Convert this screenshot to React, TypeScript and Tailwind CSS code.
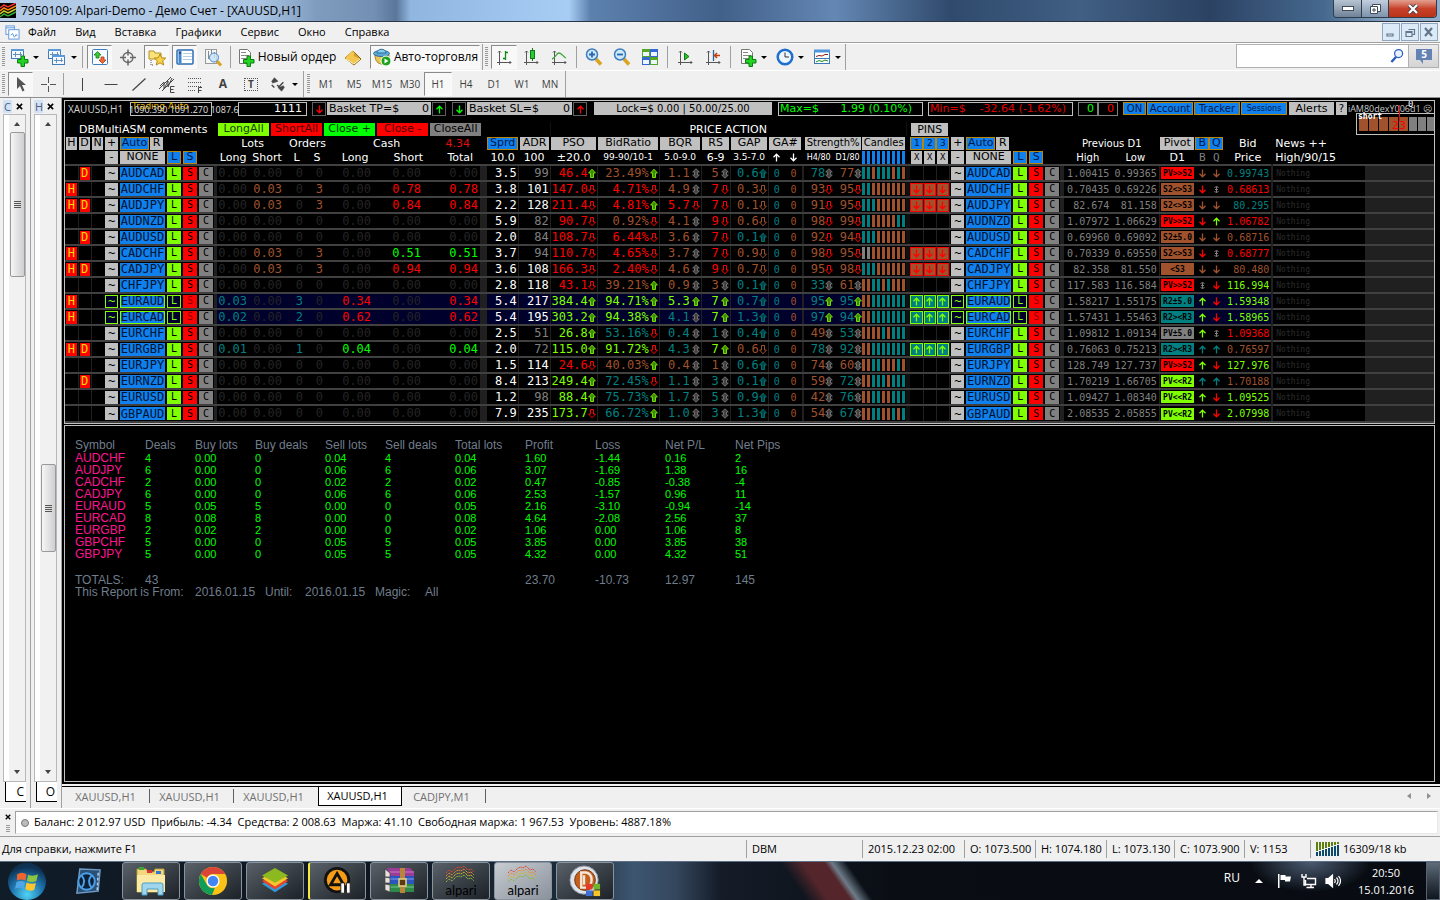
import React from "react";

const UI = "font-['Open_Sans','Noto_Sans',sans-serif]";
const VERD = "font-['DejaVu_Sans',sans-serif]";
const MONO = "font-['DejaVu_Sans_Mono',monospace]";

const TEXT: Record<string, string> = {
  r: "text-[#ff0000]",
  s: "text-[#a0522d]",
  t: "text-[#008080]",
  g: "text-[#7fff00]",
  l: "text-[#00ff00]",
  x: "text-[#808080]",
  w: "text-white",
  n: "text-[#242424]",
};
const BG: Record<string, string> = {
  r: "bg-[#ff0000]",
  s: "bg-[#a0522d]",
  t: "bg-[#008080]",
  g: "bg-[#7fff00]",
  x: "bg-[#808080]",
};

/* ---------- market data ---------- */
type Row = {
  sym: string;
  flags: string;
  pos?: string;
  hl?: boolean;
  vals: string[];
  candles: string;
  pins?: "u" | "d";
  high: string;
  low: string;
  pivot: [string, string];
  bq: [string, string];
  bid: [string, string];
};

const ROWS: Row[] = [
  { sym: "AUDCAD", flags: "D", vals: ["3.5", "99", "46.4 r u", "23.49% s u", "1.1 s b", "5 s b", "0.6 t e", "78 t b", "77 s b"], candles: "ttstttsts", high: "1.00415", low: "0.99365", pivot: ["PV>>S2", "r"], bq: ["sd", "sd"], bid: ["0.99743", "t"] },
  { sym: "AUDCHF", flags: "H", pos: "S 0.03 3 0.78 r", vals: ["3.8", "101", "147.0 r d", "4.71% r d", "4.9 s b", "7 r d", "0.3 s f", "93 s d", "95 s d"], candles: "ttsssssss", pins: "d", high: "0.70435", low: "0.69226", pivot: ["S2<>S3", "s"], bq: ["rd", "xb"], bid: ["0.68613", "r"] },
  { sym: "AUDJPY", flags: "HD", pos: "S 0.03 3 0.84 r", vals: ["2.2", "128", "211.4 r d", "4.81% r u", "5.7 r d", "7 r d", "0.1 s f", "91 s d", "95 s d"], candles: "tttssssss", pins: "d", high: "82.674", low: "81.158", pivot: ["S2<>S3", "s"], bq: ["sd", "sd"], bid: ["80.295", "t"] },
  { sym: "AUDNZD", flags: "", vals: ["5.9", "82", "90.7 r d", "0.92% s d", "4.1 s b", "9 r d", "0.6 s f", "98 s d", "99 s d"], candles: "ttssssstt", high: "1.07972", low: "1.06629", pivot: ["PV>>S2", "r"], bq: ["rd", "gu"], bid: ["1.06782", "r"] },
  { sym: "AUDUSD", flags: "D", vals: ["2.0", "84", "108.7 r d", "6.44% r d", "3.6 s b", "7 r d", "0.1 t e", "92 s d", "94 s d"], candles: "tttssssss", high: "0.69960", low: "0.69092", pivot: ["S2±5.0", "s"], bq: ["sd", "sd"], bid: ["0.68716", "s"] },
  { sym: "CADCHF", flags: "H", pos: "S 0.03 3 0.51 l", vals: ["3.7", "94", "110.7 r d", "4.65% r d", "3.7 s b", "7 r d", "0.9 s f", "98 s d", "95 s d"], candles: "xxsssssss", pins: "d", high: "0.70339", low: "0.69550", pivot: ["S2<>S3", "s"], bq: ["rd", "xb"], bid: ["0.68777", "r"] },
  { sym: "CADJPY", flags: "HD", pos: "S 0.03 3 0.94 r", vals: ["3.6", "108", "166.3 r d", "2.40% r d", "4.6 s b", "9 r d", "0.7 s f", "95 s d", "98 s d"], candles: "tttssssss", pins: "d", high: "82.358", low: "81.550", pivot: ["<S3", "s"], bq: ["sd", "sd"], bid: ["80.480", "s"] },
  { sym: "CHFJPY", flags: "", vals: ["2.8", "118", "43.1 r d", "39.21% s u", "0.9 s b", "3 s b", "0.1 t e", "33 t b", "61 s b"], candles: "ssttstsss", high: "117.583", low: "116.584", pivot: ["PV>>S2", "r"], bq: ["xb", "rd"], bid: ["116.994", "g"] },
  { sym: "EURAUD", flags: "H", hl: true, pos: "L 0.03 3 0.34 r", vals: ["5.4", "217", "384.4 g u", "94.71% g u", "5.3 g u", "7 g u", "0.7 t e", "95 t u", "95 t u"], candles: "ssttttttt", pins: "u", high: "1.58217", low: "1.55175", pivot: ["R2±5.0", "t"], bq: ["gu", "rd"], bid: ["1.59348", "g"] },
  { sym: "EURCAD", flags: "H", hl: true, pos: "L 0.02 2 0.62 r", vals: ["5.4", "195", "303.2 g u", "94.38% g u", "4.1 t b", "7 g u", "1.3 t e", "97 t u", "94 t u"], candles: "ssttttttt", pins: "u", high: "1.57431", low: "1.55463", pivot: ["R2><R3", "t"], bq: ["gu", "rd"], bid: ["1.58965", "g"] },
  { sym: "EURCHF", flags: "", vals: ["2.5", "51", "26.8 g u", "53.16% t d", "0.4 t b", "1 t b", "0.4 t e", "49 s b", "53 t b"], candles: "sssststtt", high: "1.09812", low: "1.09134", pivot: ["PV±5.0", "x"], bq: ["gu", "xb"], bid: ["1.09368", "r"] },
  { sym: "EURGBP", flags: "HD", pos: "L 0.01 1 0.04 l", vals: ["2.0", "72", "115.0 g u", "91.72% g d", "4.3 t b", "7 g u", "0.6 s f", "78 t b", "92 t b"], candles: "ssttttttt", pins: "u", high: "0.76063", low: "0.75213", pivot: ["R2><R3", "t"], bq: ["tu", "tu"], bid: ["0.76597", "s"] },
  { sym: "EURJPY", flags: "", vals: ["1.5", "114", "24.6 r d", "40.03% s u", "0.4 s b", "1 s b", "0.6 t e", "74 s b", "60 s b"], candles: "ssttsssts", high: "128.749", low: "127.737", pivot: ["PV>>S2", "r"], bq: ["gu", "rd"], bid: ["127.976", "g"] },
  { sym: "EURNZD", flags: "D", vals: ["8.4", "213", "249.4 g u", "72.45% t d", "1.1 t b", "3 t b", "0.1 t e", "59 s b", "72 t b"], candles: "sstttsttt", high: "1.70219", low: "1.66705", pivot: ["PV<<R2", "g"], bq: ["tu", "tu"], bid: ["1.70188", "s"] },
  { sym: "EURUSD", flags: "", vals: ["1.2", "98", "88.4 g u", "75.73% t u", "1.7 t b", "5 t b", "0.9 t e", "42 s b", "76 t b"], candles: "ssttssttt", high: "1.09427", low: "1.08340", pivot: ["PV<<R2", "g"], bq: ["gu", "rd"], bid: ["1.09525", "g"] },
  { sym: "GBPAUD", flags: "", vals: ["7.9", "235", "173.7 g d", "66.72% t u", "1.0 t b", "3 t b", "1.3 t e", "54 s b", "67 t b"], candles: "ssttsstst", high: "2.08535", low: "2.05855", pivot: ["PV<<R2", "g"], bq: ["gu", "rd"], bid: ["2.07998", "g"] },
];

/* ---------- arrows ---------- */
const UP = "M4 1.2 7.4 5H5.5V9.500H2.500V5H.6Z";
const DOWN = "M4 9.800 7.4 6H5.500V1.500H2.500V6H.6Z";
const FAT: Record<string, [string, string, string]> = {
  u: ["#6fe000", "#3f8800", UP],
  e: ["#007070", "#004848", UP],
  d: ["#ff0000", "none", DOWN],
  f: ["#a0522d", "none", DOWN],
  b: ["#6a7078", "#4a4038", "M4 .8 7.3 4H5.500V7H7.3L4 10.200 .7 7H2.500V4H.7Z"],
};
function Fat({ k }: { k: string }) {
  const [c, f, d] = FAT[k];
  return (
    <svg viewBox="0 0 8 11" className="h-[11px] w-2 shrink-0" fill={f} stroke={c}>
      <path d={d} />
    </svg>
  );
}
function Thin({ dir, className = "" }: { dir: string; className?: string }) {
  return (
    <svg viewBox="0 0 9 9" className={`mx-auto block h-[9px] w-[9px] ${className}`} fill="none" stroke="currentColor" strokeWidth="1.3">
      {dir === "u" && <path d="M4.5 8.500V1M1.500 4.200 4.500 1.200 7.500 4.200" />}
      {dir === "d" && <path d="M4.5.5V8M1.500 4.800 4.500 7.800 7.500 4.800" />}
      {dir === "b" && <path d="M2.500 3 4.500 1 6.500 3M2.500 6 4.500 8 6.500 6M4.500 1.500V7.500M3 4.500H6" strokeWidth="1" />}
    </svg>
  );
}

/* ---------- main board ---------- */
const COLS = [
  "w-[13px]", "w-[13px]", "w-[13px]", "w-[15px]", "w-[47px]", "w-[16px]", "w-[16px]", "w-[16px]", "w-[3px]",
  "w-[32px]", "w-[35px]", "w-[21px]", "w-[20px]", "w-[48px]", "w-[50px]", "w-[57px]", "w-[7px]",
  "w-[31px]", "w-[32px]", "w-[47px]", "w-[62px]", "w-[42px]", "w-[29px]", "w-[38px]", "w-[17px]", "w-[17px]", "w-[2px]",
  "w-[29px]", "w-[29px]", "w-[44px]", "w-[4px]", "w-[13px]", "w-[13px]", "w-[13px]", "w-[1px]",
  "w-[15px]", "w-[47px]", "w-[16px]", "w-[16px]", "w-[16px]", "w-[4px]",
  "w-[47px]", "w-[48px]", "w-[36px]", "w-[14px]", "w-[14px]", "w-[49px]", "w-[93px]", "w-auto",
];

const GREY = "bg-[#c0c0c0] text-black";
const BLUE = "bg-[#0f80ee] text-[#001848] border border-[#b8860b]";

function Btn({ children, className = "", label }: { children: React.ReactNode; className?: string; label?: string }) {
  return (
    <button aria-label={label} className={`flex h-[13px] w-full items-center justify-center overflow-visible p-0 leading-[12px] whitespace-nowrap ${className}`}>
      {children}
    </button>
  );
}

function Ops({ row }: { row: Row }) {
  const on = "border border-[#7fff00]";
  return (
    <>
      <td className="px-px">
        <Btn className={row.hl ? `${on} bg-[#00002c] text-[#7fff00]` : GREY}>~</Btn>
      </td>
      <td className="px-px">
        <Btn className={`bg-[#0f80ee] text-[#001430] ${row.hl ? on : ""}`}>{row.sym}</Btn>
      </td>
      <td className="px-px text-[10px]">
        <Btn className={row.hl ? `${on} bg-[#00002c] text-[#7fff00]` : "bg-[#7fff00] text-black"}>L</Btn>
      </td>
      <td className="px-px text-[10px]">
        <Btn className={`bg-[#ff0000] ${row.hl ? "text-[#8b0000]" : "text-black"}`}>S</Btn>
      </td>
      <td className="px-px text-[10px]">
        <Btn className="bg-[#808080] text-black">C</Btn>
      </td>
      <td className="bg-[#202020]" />
    </>
  );
}

function Flag({ on, c }: { on: boolean; c: string }) {
  return (
    <td className="border-r border-[#202020] px-px">
      {on && <span className="block h-[13px] bg-[#ff0000] text-center leading-[13px] text-[#ffd700]">{c}</span>}
    </td>
  );
}

function Num({ v, dim, color = "n", bg }: { v: string; dim: string; color?: string; bg?: string }) {
  const on = v !== dim;
  return <td className={`pr-[2px] text-right ${on ? TEXT[color] : TEXT.n} ${bg ?? ""}`}>{v}</td>;
}

function BoardRow({ row }: { row: Row }) {
  const hl = row.hl ? "bg-[#00002c]" : "";
  const [side, lot, ord, cash, cc] = (row.pos ?? "N 0.00 0 0.00 n").split(" ");
  const L = side === "L";
  const S = side === "S";
  const gaps = ["", "gap-px", "gap-[2px]", "gap-[2px]", ""];
  return (
    <tr className="h-4 border-t-2 border-[#404040]">
      <Flag on={row.flags.includes("H")} c="H" />
      <Flag on={row.flags.includes("D")} c="D" />
      <td />
      <Ops row={row} />
      <Num v={L ? lot : "0.00"} dim="0.00" color="t" bg={hl} />
      <Num v={S ? lot : "0.00"} dim="0.00" color="s" bg={hl} />
      <Num v={L ? ord : "0"} dim="0" color="t" bg={hl} />
      <Num v={S ? ord : "0"} dim="0" color="s" bg={hl} />
      <Num v={L ? cash : "0.00"} dim="0.00" color={cc} bg={hl} />
      <Num v={S ? cash : "0.00"} dim="0.00" color={cc} bg={hl} />
      <Num v={cash} dim="0.00" color={cc} bg={hl} />
      <td className="bg-[#202020]" />
      <td className={`border-r border-[#202020] pr-px text-right text-white ${hl}`}>{row.vals[0]}</td>
      <td className={`border-r border-[#202020] pr-px text-right ${Number(row.vals[1]) >= 100 ? "text-white" : TEXT.x} ${hl}`}>{row.vals[1]}</td>
      {row.vals.slice(2, 7).map((v, i) => {
        const [n, c, a] = v.split(" ");
        return (
          <td key={i} className={`border-r border-[#202020] pr-px ${TEXT[c]} ${hl}`}>
            <div className={`flex items-center justify-end ${gaps[i]}`}>
              <span>{n}</span>
              <Fat k={a} />
            </div>
          </td>
        );
      })}
      <td className={`text-center text-[10px] text-[#008080] ${hl}`}>0</td>
      <td className={`text-center text-[10px] text-[#a0522d] ${hl}`}>0</td>
      <td className="bg-[#202020]" />
      {row.vals.slice(7).map((v, i) => {
        const [n, c, a] = v.split(" ");
        return (
          <td key={i} className={`${TEXT[c]} ${hl}`}>
            <div className="flex items-center justify-end">
              <span>{n}</span>
              <Fat k={a} />
            </div>
          </td>
        );
      })}
      <td>
        <div className="flex h-[12px] gap-[2px]">
          {row.candles.split("").map((c, i) => (
            <span key={i} className={`w-[3px] shrink-0 ${BG[c]}`} />
          ))}
        </div>
      </td>
      <td className="bg-[#101010]" />
      {[0, 1, 2].map((i) => (
        <td key={i} className="border-r border-[#202020]">
          {row.pins && (
            <Btn
              label={row.pins === "u" ? "Pin up" : "Pin down"}
              className={row.pins === "u" ? "border border-[#7fff00] bg-[#008080] text-[#7fff00]" : "border border-[#ff0000] bg-[#a0522d] text-[#ff0000]"}
            >
              <Thin dir={row.pins} />
            </Btn>
          )}
        </td>
      ))}
      <td />
      <Ops row={row} />
      <td className="pr-[2px] text-right text-[10px] text-[#808080]">{row.high}</td>
      <td className="border-r border-[#202020] pr-[2px] text-right text-[10px] text-[#808080]">{row.low}</td>
      <td className="px-px text-[8px] font-bold text-black">
        <div className={`h-3 text-center leading-[13px] ${BG[row.pivot[1]]}`}>{row.pivot[0]}</div>
      </td>
      {row.bq.map((b, i) => (
        <td key={i} className={`${TEXT[b[0]]} ${hl}`}>
          <Thin dir={b[1]} />
        </td>
      ))}
      <td className={`border-r-2 border-[#202020] pr-[2px] text-right text-[10px] ${TEXT[row.bid[1]]} ${hl}`}>{row.bid[0]}</td>
      <td className="pl-[3px] text-left text-[8px] text-[#2c2c2c]">Nothing</td>
      <td className="bg-[#202020]" />
    </tr>
  );
}

function SymbolHead1() {
  return (
    <>
      <td className="px-px"><Btn className={GREY}>+</Btn></td>
      <td colSpan={2} className="pl-px">
        <div className="flex gap-px">
          <Btn className={`${BLUE} max-w-[29px]`}>Auto</Btn>
          <Btn className={`${GREY} max-w-[13px]`}>R</Btn>
        </div>
      </td>
      <td colSpan={3} />
    </>
  );
}
function SymbolHead2() {
  return (
    <>
      <td className="px-px"><Btn className={GREY}>-</Btn></td>
      <td className="px-px"><Btn className={GREY}>NONE</Btn></td>
      <td className="px-px"><Btn className={BLUE}>L</Btn></td>
      <td className="px-px"><Btn className={BLUE}>S</Btn></td>
      <td colSpan={2} />
    </>
  );
}

function Board() {
  const closers: [string, string][] = [
    ["LongAll", "bg-[#7fff00] text-[#204000]"],
    ["ShortAll", "bg-[#ff0000] text-[#500000]"],
    ["Close +", "bg-[#00ff00] text-[#003000]"],
    ["Close -", "bg-[#ff0000] text-[#500000]"],
    ["CloseAll", "bg-[#808080] text-black"],
  ];
  return (
    <table className={`w-full table-fixed border-collapse ${MONO} text-[12px] leading-[13px]`}>
      <colgroup>
        {COLS.map((c, i) => (
          <col key={i} className={c} />
        ))}
      </colgroup>
      <thead className={`${VERD} text-[11px] leading-[13px] whitespace-nowrap text-white`}>
        <tr className="h-[14px]">
          <td colSpan={9} className="pl-[14px]">DBMultiASM comments</td>
          <td colSpan={8} className="pr-[6px] pl-px">
            <div className="flex gap-[2px]">
              {closers.map(([t, c]) => (
                <Btn key={t} className={c}>{t}</Btn>
              ))}
            </div>
          </td>
          <td colSpan={2} />
          <td colSpan={11} className="border-x border-[#101010] text-center">PRICE ACTION</td>
          <td />
          <td colSpan={3} className="px-px"><div className={`${GREY} text-center`}>PINS</div></td>
          <td colSpan={15} />
        </tr>
        <tr className="h-[14px]">
          {["H", "D", "N"].map((h) => (
            <td key={h} className="px-px"><Btn className={GREY}>{h}</Btn></td>
          ))}
          <SymbolHead1 />
          <td colSpan={2} className="pl-1 text-center">Lots</td>
          <td colSpan={3} className="pl-[5px] text-left">Orders</td>
          <td className="text-left">Cash</td>
          <td className="pr-[10px] text-right text-[#e01010]">4.34</td>
          <td />
          <td><Btn className={BLUE}>Sprd</Btn></td>
          <td className="pr-px pl-[2px]"><Btn className={GREY}>ADR</Btn></td>
          <td className="px-px"><Btn className={GREY}>PSO</Btn></td>
          <td className="px-px"><Btn className={GREY}>BidRatio</Btn></td>
          <td className="px-px"><Btn className={GREY}>BQR</Btn></td>
          <td className="px-px"><Btn className={GREY}>RS</Btn></td>
          <td className="px-px"><Btn className={GREY}>GAP</Btn></td>
          <td colSpan={2} className="px-px"><Btn className={GREY}>GA#</Btn></td>
          <td />
          <td colSpan={2} className="px-px text-[10px]"><Btn className={GREY}>Strength%</Btn></td>
          <td className="pr-px text-[10px]"><Btn className={GREY}>Candles</Btn></td>
          <td />
          {["1", "2", "3"].map((n) => (
            <td key={n} className="text-[9px]"><Btn className={BLUE}>{n}</Btn></td>
          ))}
          <td />
          <SymbolHead1 />
          <td colSpan={2} className="text-center text-[10px]">Previous D1</td>
          <td className="px-px"><Btn className={GREY}>Pivot</Btn></td>
          <td><Btn className={BLUE}>B</Btn></td>
          <td><Btn className={BLUE}>Q</Btn></td>
          <td className="text-center">Bid</td>
          <td className="pl-[3px] text-left">News ++</td>
          <td />
        </tr>
        <tr className="h-[15px]">
          <td colSpan={3} />
          <SymbolHead2 />
          <td className="text-center">Long</td>
          <td className="pl-px text-center">Short</td>
          <td className="pl-1 text-center">L</td>
          <td className="pl-1 text-center">S</td>
          <td className="pl-3 text-center">Long</td>
          <td className="text-right">Short</td>
          <td className="pr-[7px] text-right">Total</td>
          <td />
          <td className="text-center">10.0</td>
          <td className="text-center">100</td>
          <td className="text-center">±20.0</td>
          <td className="text-center text-[9px]">99-90/10-1</td>
          <td className="text-center text-[9px]">5.0-9.0</td>
          <td className="text-center">6-9</td>
          <td className="text-center text-[9px]">3.5-7.0</td>
          <td><Thin dir="u" /></td>
          <td><Thin dir="d" /></td>
          <td />
          <td className="text-center text-[8px]">H4/80</td>
          <td className="text-center text-[8px]">D1/80</td>
          <td>
            <div className="flex h-[13px] gap-[2px]">
              {Array.from({ length: 9 }, (_, i) => (
                <span key={i} className="w-[3px] shrink-0 bg-[#0f80ee]" />
              ))}
            </div>
          </td>
          <td />
          {[0, 1, 2].map((n) => (
            <td key={n} className={`px-px text-[9px] ${MONO}`}><Btn className={GREY}>X</Btn></td>
          ))}
          <td />
          <SymbolHead2 />
          <td className="text-center text-[10px]">High</td>
          <td className="text-center text-[10px]">Low</td>
          <td className="text-center">D1</td>
          <td className={`text-center text-[#808080] ${MONO}`}>B</td>
          <td className={`text-center text-[#808080] ${MONO}`}>Q</td>
          <td className="text-center">Price</td>
          <td className="pl-[3px] text-left">High/90/15</td>
          <td />
        </tr>
      </thead>
      <tbody>
        {ROWS.map((r) => (
          <BoardRow key={r.sym} row={r} />
        ))}
      </tbody>
    </table>
  );
}

function Basket({ id, name, w }: { id: string; name: string; w: string }) {
  return (
    <div className={`flex h-[13px] items-center bg-[#c0c0c0] px-[2px] text-black ${w}`}>
      <label htmlFor={id} className="whitespace-nowrap">{name}</label>
      <input id={id} defaultValue="0" className="w-full min-w-0 bg-transparent p-0 text-right outline-none" />
    </div>
  );
}
function ArrowBox({ dir, className }: { dir: string; className: string }) {
  return (
    <button aria-label="Step" className={`flex h-[14px] w-[14px] items-center border border-[#606060] bg-black ${className}`}>
      <Thin dir={dir} />
    </button>
  );
}

function TopStrip() {
  return (
    <div className={`relative flex h-[21px] items-start pt-px ${VERD} text-[11px] leading-[13px] whitespace-nowrap`}>
      <div className={`w-[65px] pl-[3px] text-[10px] leading-[14px] text-[#d0d0d0] ${UI}`}>XAUUSD,H1</div>
      <div className="relative h-[14px] w-[82px] border border-[#c0c0c0]">
        <span className="absolute top-[-3px] left-px text-[9px] text-[#e8b800]">Trading Auto</span>
        <span className={`absolute top-0 left-[-2px] text-[9px] text-[#e0e0e0] ${UI}`}>1090.390 1091.270 1087.6</span>
      </div>
      <div className="ml-[26px] h-[14px] w-[69px] border border-[#c0c0c0] pr-1 text-right leading-[12px] text-white">1111</div>
      <div className="ml-[5px] flex gap-px">
        <ArrowBox dir="d" className="text-[#ff0000]" />
        <Basket id="tp" name="Basket TP=$" w="w-[104px]" />
        <ArrowBox dir="u" className="text-[#00ff00]" />
      </div>
      <div className="ml-[6px] flex gap-px">
        <ArrowBox dir="d" className="text-[#00ff00]" />
        <Basket id="sl" name="Basket SL=$" w="w-[105px]" />
        <ArrowBox dir="u" className="text-[#ff0000]" />
      </div>
      <div className="ml-[7px] h-[13px] w-[178px] bg-[#c0c0c0] text-center text-[10px] text-black">Lock=$ 0.00 | 50.00/25.00</div>
      <div className="ml-[6px] flex h-[14px] w-[145px] justify-between border border-[#c0c0c0] pr-[10px] pl-px leading-[12px] text-[#00ff00]">
        <span>Max=$</span>
        <span>1.99 (0.10%)</span>
      </div>
      <div className="ml-[5px] flex h-[14px] w-[145px] justify-between border border-[#c0c0c0] pr-[6px] pl-px leading-[12px] text-[#e00000]">
        <span>Min=$</span>
        <span>-32.64 (-1.62%)</span>
      </div>
      <div className="ml-[5px] h-[14px] w-[20px] border border-[#808080] pr-[3px] text-right leading-[12px] text-[#00ff00]">0</div>
      <div className="h-[14px] w-[20px] border border-[#808080] pr-[3px] text-right leading-[12px] text-[#ff0000]">0</div>
      <div className="ml-[5px] flex gap-px text-[10px]">
        <Btn className={`${BLUE} min-w-[23px]`}>ON</Btn>
        <Btn className={`${BLUE} min-w-[46px]`}>Account</Btn>
        <Btn className={`${BLUE} min-w-[46px]`}>Tracker</Btn>
        <Btn className={`${BLUE} min-w-[46px] text-[8px]`}>Sessions</Btn>
        <Btn className={`${GREY} ml-px min-w-[45px] text-[11px]`}>Alerts</Btn>
        <Btn className={`${GREY} ml-px min-w-[11px]`}>?</Btn>
      </div>
      <div className={`ml-auto pr-[2px] text-[9px] text-[#c8c8c8] ${UI}`}>iAM80dexY006d1 ☹</div>
      <div className="absolute top-[12px] right-[-1px] flex h-[22px] w-[79px] items-end gap-px overflow-visible border border-[#c0c0c0] bg-black px-[2px] pb-[3px]">
        {["s", "s", "s", "s", "s"].map((c, i) => (
          <span key={i} className={`h-[14px] w-[9px] shrink-0 ${BG[c]}`} />
        ))}
        {[0, 1, 2].map((i) => (
          <span key={i} className="h-[14px] w-[8px] shrink-0 bg-[#808080]" />
        ))}
        <span className={`absolute top-[-4px] left-px text-[8px] font-bold text-white ${MONO}`}>short</span>
        <span className="absolute top-[5px] left-[35px] text-[11px] text-[#ff0000]">23</span>
        <span className="absolute top-[-9px] left-[42px] h-[16px] w-px bg-[#ff0000]" />
        <span className={`absolute top-[-14px] left-[51px] text-[9px] leading-[9px] text-white ${MONO}`}>0</span>
      </div>
    </div>
  );
}

/* ---------- report ---------- */
const HEADS = ["Symbol", "Deals", "Buy lots", "Buy deals", "Sell lots", "Sell deals", "Total lots", "Profit", "Loss", "Net P/L", "Net Pips"];
const RCOLS = ["w-[70px]", "w-[50px]", "w-[60px]", "w-[70px]", "w-[60px]", "w-[70px]", "w-[70px]", "w-[70px]", "w-[70px]", "w-[70px]", "w-[70px]"];
const REPORT = [
  "AUDCHF 4 0.00 0 0.04 4 0.04 1.60 -1.44 0.16 2",
  "AUDJPY 6 0.00 0 0.06 6 0.06 3.07 -1.69 1.38 16",
  "CADCHF 2 0.00 0 0.02 2 0.02 0.47 -0.85 -0.38 -4",
  "CADJPY 6 0.00 0 0.06 6 0.06 2.53 -1.57 0.96 11",
  "EURAUD 5 0.05 5 0.00 0 0.05 2.16 -3.10 -0.94 -14",
  "EURCAD 8 0.08 8 0.00 0 0.08 4.64 -2.08 2.56 37",
  "EURGBP 2 0.02 2 0.00 0 0.02 1.06 0.00 1.06 8",
  "GBPCHF 5 0.00 0 0.05 5 0.05 3.85 0.00 3.85 38",
  "GBPJPY 5 0.00 0 0.05 5 0.05 4.32 0.00 4.32 51",
];
function Report() {
  return (
    <div className="px-[10px] pt-[12px] font-['Liberation_Sans',Arial,sans-serif] text-[12px] leading-[12px] text-[#707d8c]">
      <table className="table-fixed border-collapse text-left whitespace-nowrap">
        <colgroup>
          {RCOLS.map((c, i) => (
            <col key={i} className={c} />
          ))}
        </colgroup>
        <thead>
          <tr className="h-[14px]">
            {HEADS.map((h) => (
              <th key={h} className="p-0 font-normal">{h}</th>
            ))}
          </tr>
        </thead>
        <tbody>
          {REPORT.map((r) => (
            <tr key={r} className="h-3 text-[11px] text-[#00ff00]">
              {r.split(" ").map((v, i) => (
                <td key={i} className={`h-3 p-0 leading-[12px] ${i ? "" : "text-[12px] text-[#ff1493]"}`}>{v}</td>
              ))}
            </tr>
          ))}
          <tr className="h-[26px] align-bottom">
            {["TOTALS:", "43", "", "", "", "", "", "23.70", "-10.73", "12.97", "145"].map((v, i) => (
              <td key={i}>{v}</td>
            ))}
          </tr>
        </tbody>
      </table>
      <div className="flex whitespace-nowrap">
        <span className="w-[120px]">This Report is From:</span>
        <span className="w-[70px]">2016.01.15</span>
        <span className="w-10">Until:</span>
        <span className="w-[70px]">2016.01.15</span>
        <span className="w-[50px]">Magic:</span>
        <span>All</span>
      </div>
    </div>
  );
}

/* ---------- toolbars ---------- */
function Svg({ children, s = 20 }: { children: React.ReactNode; s?: number }) {
  return (
    <svg viewBox="0 0 20 20" width={s} height={s} fill="none" className="shrink-0">
      {children}
    </svg>
  );
}
const Plus = () => <path d="M11 9h3.500v3.500H18V16h-3.500v3.500H11V16H7.500v-3.500H11Z" fill="#22d322" stroke="#0b7d12" />;
const Axes = () => <path d="M5.500 4v14M3 15.500h14M4 5.500 5.500 4 7 5.500M15.500 14l1.500 1.500-1.500 1.500" stroke="#555" />;
const Win = ({ x, y }: { x: number; y: number }) => (
  <g>
    <rect x={x + 0.5} y={y + 0.5} width="12" height="9" fill="#f4f9ff" stroke="#3f7dbd" />
    <path d={`M${x} ${y + 1}h13`} stroke="#5b9bd9" strokeWidth="2" />
    <path d={`M${x + 2} ${y + 5.5}h9M${x + 4.5} ${y + 3}v5M${x + 9.5} ${y + 3}v4`} stroke="#6a8fb5" />
  </g>
);
const Doc = () => (
  <>
    <path d="M3.500 2.500h8l3 3v11h-11Z" fill="#fff" stroke="#777" />
    <path d="M5 5.500h5M5 8.500h8M5 11.500h7" stroke="#888" />
  </>
);
const Glass = ({ minus }: { minus?: boolean }) => (
  <>
    <path d="m12 12 5 5.500" stroke="#d9a520" strokeWidth="3.500" />
    <circle cx="8" cy="7.500" r="5.500" fill="#cfe9fb" stroke="#3c7dbe" strokeWidth="1.500" />
    <path d={minus ? "M5 7.500h6" : "M5 7.500h6M8 4.500v6"} stroke="#2b67b0" strokeWidth="1.800" />
  </>
);
const Star = () => <path d="m13 7 1.700 3.800 4 .3-3 2.700 1 4.200-3.700-2.200-3.700 2.200 1-4.200-3-2.700 4-.3Z" fill="#fbd34a" stroke="#b88a14" />;

const PRESSED = "border border-[#fafafa] border-t-[#8a8a8a] border-l-[#8a8a8a] bg-[#f8f8f8]";
function Tool({ label, on, children, className = "w-7" }: { label: string; on?: boolean; children: React.ReactNode; className?: string }) {
  return (
    <button aria-label={label} className={`flex h-[24px] shrink-0 items-center justify-center ${on ? PRESSED : ""} ${className}`}>
      {children}
    </button>
  );
}
const Tri = () => <span className="h-0 w-0 border-x-[3px] border-t-[3px] border-x-transparent border-t-black" />;
const Sep = ({ tight }: { tight?: boolean }) => <span className={`h-[22px] w-px shrink-0 bg-[#a0a0a0] ${tight ? "mx-[3px]" : "mx-[4px]"}`} />;
const Grip = () => (
  <span className="mx-[2px] h-[20px] w-[3px] shrink-0 bg-[repeating-linear-gradient(180deg,#999_0_1px,#f0f0f0_1px_2px)]" />
);

function Toolbar1() {
  return (
    <div className="flex h-[27px] items-center border-t border-white">
      <Grip />
      <Tool label="New chart" className="ml-px w-[33px] gap-[3px]"><Svg><Win x={1} y={2} /><Plus /></Svg><Tri /></Tool>
      <Tool label="Profiles" className="ml-1 w-[33px] gap-1"><Svg><Win x={1} y={2} /><Win x={5} y={8} /></Svg><Tri /></Tool>
      <Sep />
      <Tool label="Market watch" on className="mr-1 w-[25px]">
        <Svg><rect x="2.500" y="2.500" width="15" height="15" rx="1" fill="#f7fbff" stroke="#3d7ebf" /><path d="m7.500 4.500 3.500 3.500H9v3H6V8H4Z" fill="#38c838" stroke="#128212" strokeWidth=".8" /><path d="m12.500 16.500 3.500-3.500h-2v-3h-3v3H9Z" fill="#f26b3a" stroke="#ad3a10" strokeWidth=".8" /></Svg>
      </Tool>
      <Tool label="Data window" className="mr-1 w-6">
        <Svg><circle cx="10" cy="10.500" r="5" stroke="#666" strokeWidth="1.300" /><path d="M10 2.500v6M10 12.500v6M2 10.500h6M12 10.500h6" stroke="#666" strokeWidth="1.500" /></Svg>
      </Tool>
      <Tool label="Navigator" on className="mr-[3px] w-[25px]">
        <Svg><path d="M2 4h5l1 2h6v6H2Z" fill="#f8e27a" stroke="#b39224" /><path d="M4 13v5h3" stroke="#555" strokeDasharray="1 1" /><Star /></Svg>
      </Tool>
      <Tool label="Terminal" on className="mr-[3px] w-[25px]">
        <Svg><rect x="2" y="3" width="16" height="14" rx="1" fill="#fff" stroke="#2c6cb3" strokeWidth="1.500" /><path d="M5 4v12" stroke="#3f86d0" strokeWidth="3" /><path d="M8 6.500h9M8 9.500h9M8 12.500h9" stroke="#b5cfe8" /><circle cx="5" cy="6" r=".8" fill="#300" /></Svg>
      </Tool>
      <Tool label="Strategy tester" className="mr-[2px] w-[25px]">
        <Svg><rect x="2.500" y="2.500" width="11" height="14" fill="#f6f6f6" stroke="#999" /><path d="M5.500 4v8M8.500 3v5M11.500 5v6" stroke="#888" /><path d="m14 14 4 4.500" stroke="#d9a520" strokeWidth="3" /><circle cx="11" cy="10.500" r="4.500" fill="#c7e3f8cc" stroke="#4b8ac5" /></Svg>
      </Tool>
      <Sep tight />
      <Tool label="Новый ордер" className="w-[104px] gap-[2px] text-[12px]"><Svg><Doc /><Plus /></Svg><span className="whitespace-nowrap">Новый ордер</span></Tool>
      <Tool label="MetaEditor" className="ml-px w-7">
        <Svg><path d="m2 11 8-7 8 8-7 6Z" fill="#d99f28" stroke="#8d6412" /><path d="m2 11 7-7q2 0 2.500 2l-1 3q3 1 6.500 3l-6 5Z" fill="#f3c64f" /><path d="m3 12 8 5 6-5" stroke="#fff3c0" /></Svg>
      </Tool>
      <Tool label="Авто-торговля" on className="ml-[3px] w-[110px] gap-[2px] text-[12px]">
        <Svg><path d="M3 8c0 6 3 9 7 9s7-3 7-9Z" fill="#e9c657" stroke="#a88420" /><ellipse cx="9.500" cy="6.500" rx="8" ry="3" fill="#5aa9d6" stroke="#2a6c99" /><path d="M5 6c0-5 9-5 9 0Z" fill="#8accec" stroke="#2a6c99" /><circle cx="14" cy="14" r="5" fill="#1aa31a" stroke="#fff" /><path d="m12.500 11.500 4 2.500-4 2.500Z" fill="#fff" /></Svg>
        <span className="whitespace-nowrap">Авто-торговля</span>
      </Tool>
      <span className="ml-[2px] h-[26px] w-px bg-[#a0a0a0]" />
      <Grip />
      <Tool label="Bars" on className="ml-px w-[26px]"><Svg><Axes /><path d="M11.500 4v9M11.500 5.500H14M9 11.500h2.500" stroke="#128a12" strokeWidth="1.300" /></Svg></Tool>
      <Tool label="Candles"><Svg><Axes /><path d="M11.500 1v13" stroke="#117711" /><rect x="9.500" y="3.500" width="4" height="8" fill="#24cc38" stroke="#117711" /></Svg></Tool>
      <Tool label="Line"><Svg><Axes /><path d="M3 12c4-1 4-6 7-6s4 4 7 5" stroke="#3aa63a" strokeWidth="1.300" /></Svg></Tool>
      <Sep tight />
      <Tool label="Zoom in"><Svg><Glass /></Svg></Tool>
      <Tool label="Zoom out"><Svg><Glass minus /></Svg></Tool>
      <Tool label="Tile">
        <Svg><path d="M2 2h8v8H2Z" fill="#57a529" /><path d="M10 2h8v8h-8Z" fill="#3568d4" /><path d="M2 10h8v8H2Z" fill="#3568d4" /><path d="M10 10h8v8h-8Z" fill="#57a529" /><path d="M3 5h6v4H3ZM11 5h6v4h-6ZM3 13h6v4H3ZM11 13h6v4h-6Z" fill="#eef6ff" /></Svg>
      </Tool>
      <Sep tight />
      <Tool label="Auto scroll"><Svg><Axes /><path d="m9.500 6 4.500 3.500-4.500 3.500Z" fill="#2dc32d" stroke="#117711" /></Svg></Tool>
      <Tool label="Chart shift"><Svg><Axes /><path d="M10.500 3v11" stroke="#2361a8" strokeWidth="1.300" /><path d="M17 8.500h-5M14 6l-2.500 2.500L14 11" stroke="#c33c0c" strokeWidth="1.500" /></Svg></Tool>
      <Sep tight />
      <Tool label="Indicators" className="w-[37px] gap-[3px]"><Svg><Doc /><Plus /></Svg><Tri /></Tool>
      <Tool label="Periods" className="w-[37px] gap-[3px]"><Svg><circle cx="10" cy="10" r="7.300" fill="#eef6ff" stroke="#1e6fcd" strokeWidth="2.500" /><path d="M10 5.500V10h4" stroke="#333" /></Svg><Tri /></Tool>
      <Tool label="Templates" className="w-[37px] gap-[3px]"><Svg><rect x="2.500" y="3.500" width="15" height="13" fill="#fff" stroke="#3c78b4" /><path d="M2 4h16" stroke="#4f94dc" strokeWidth="3" /><path d="m4 9.500 3-1 3 .5 3-1.500h3" stroke="#8c1d10" /><path d="M2 11.500h16" stroke="#3c78b4" /><path d="m4 15 3-1.500 3 1 3-1.500 3 1" stroke="#1d8a1d" /></Svg><Tri /></Tool>
      <span className="h-[26px] w-px bg-[#a0a0a0]" />
      <div className="mr-px ml-auto flex h-6 self-start">
        <div className="flex w-[173px] items-center border border-[#b0b0b0] bg-white pr-[3px]">
          <input aria-label="Search" className="h-full min-w-0 flex-1 bg-transparent px-1 text-[12px] outline-none" />
          <Svg s={16}><path d="m9 11-6 6.500" stroke="#2a5ac4" strokeWidth="3" /><circle cx="12" cy="7" r="5" fill="#e8f1ff" stroke="#2a5ac4" strokeWidth="1.500" /></Svg>
        </div>
        <button aria-label="Messages" className="flex w-[30px] items-center justify-center border border-l-0 border-[#b0b0b0] bg-linear-to-b from-[#ececec] to-[#d4d4d4]">
          <svg viewBox="0 0 16 16" className="h-4 w-4" fill="#6582b5"><path d="M0 1h16v11H7v4l-3-4H0Z" /><text x="8" y="10" textAnchor="middle" fontFamily="Open Sans" fontSize="10" fontWeight="700" fill="#fff">5</text></svg>
        </button>
      </div>
    </div>
  );
}

function Toolbar2() {
  return (
    <div className="flex h-[27px] items-center border-t border-white text-[10px] text-[#404040]">
      <Grip />
      <Tool label="Cursor" on className="ml-px w-[25px]"><Svg><path d="M6 3v12l3-3 2.500 5.500 2-1L11 11h4Z" fill="#555" /></Svg></Tool>
      <Tool label="Crosshair" className="ml-[2px] w-[26px]"><Svg><path d="M10.500 3v6M10.500 12v6M3 10.500h6M12 10.500h6" stroke="#555" /></Svg></Tool>
      <span className="mx-[2px] h-[22px] w-px bg-[#a0a0a0]" />
      <Tool label="Vertical line" className="ml-[3px] w-7"><Svg><path d="M9.500 4v13" stroke="#444" /></Svg></Tool>
      <Tool label="Horizontal line"><Svg><path d="M3.500 10.500h13" stroke="#444" /></Svg></Tool>
      <Tool label="Trend line"><Svg><path d="m3.500 16.500 13-12" stroke="#444" strokeWidth="1.200" /></Svg></Tool>
      <Tool label="Channel"><Svg><path d="m2 15 12-12M5 17 17 5M3 12l4-4v7l4-8v6l4-9" stroke="#444" /><path d="M17.500 12.500h-4v6h4M13.500 15.500h3" stroke="#444" /></Svg></Tool>
      <Tool label="Fibonacci"><Svg><path d="M3 4.500h14M3 8.500h14M3 12.500h14M3 16.500h8" stroke="#555" strokeDasharray="1 1" /><path d="M17 13.500h-3.500v5.500M13.500 16.500H16.500" stroke="#444" /></Svg></Tool>
      <Tool label="Text"><span className="text-[12px] font-bold">A</span></Tool>
      <Tool label="Label"><span className="border border-dotted border-[#555] px-[3px] text-[10px] leading-[11px] font-bold">T</span></Tool>
      <Tool label="Arrows" className="w-[36px] gap-[5px]"><Svg s={18}><path d="m6 3 4 4-3 1-3 1-1-2ZM14 18l-4-4 3-1 3-1 1 2Z" fill="#444" stroke="#444" strokeWidth=".6" /><path d="m9 11 2 2 5-5M3 11l3 3" stroke="#444" strokeWidth="1.500" /></Svg><Tri /></Tool>
      <span className="mr-px ml-[2px] h-[26px] w-px bg-[#a0a0a0]" />
      <Grip />
      {["M1", "M5", "M15", "M30", "H1", "H4", "D1", "W1", "MN"].map((p) => (
        <Tool key={p} label={p} on={p === "H1"}>{p}</Tool>
      ))}
      <span className="ml-px h-[26px] w-px bg-[#a0a0a0]" />
    </div>
  );
}

function TitleBar() {
  return (
    <header className="flex h-[22px] items-center border-b border-[#2a3546] bg-[linear-gradient(90deg,#b4cce8_0%,#a9c4e2_18%,#7f9cbe_22%,#7390b4_26%,#5a7698_27.5%,#90b6e0_28.500%,#a8cdf5_39.500%,#5d81ae_41%,#41608a_50%,#6487b3_58%,#2f4a6c_66%,#405f83_75%,#2b4263_84%,#46698f_92%,#90adcb_97%)]">
      <svg viewBox="0 0 16 15" className="h-[15px] w-4 bg-black" fill="none">
        <path d="M0 5 4 2l4 2 4-2 4-2" stroke="#e33" strokeWidth="1.500" />
        <path d="m0 8 4-3 4 2 4-2 4-2" stroke="#f80" strokeWidth="1.500" />
        <path d="m0 11 4-3 4 2 4-2 4-2" stroke="#cc2" strokeWidth="1.500" />
        <path d="m0 14 4-3 4 2 4-2 4-2" stroke="#3a3" strokeWidth="1.500" />
      </svg>
      <span className="ml-[5px] text-[12px] whitespace-nowrap text-black">7950109: Alpari-Demo - Демо Счет - [XAUUSD,H1]</span>
      <div className="mr-[3px] ml-auto flex h-[18px] self-start overflow-hidden rounded-b-[4px] border border-t-0 border-[#303c4c] text-white">
        <button aria-label="Minimize" className="flex w-[28px] items-center justify-center border-r border-[#303c4c] bg-linear-to-b from-[#b8c4d2] to-[#6f8297]"><span className="h-[5px] w-[12px] border border-[#404a58] bg-white" /></button>
        <button aria-label="Restore" className="flex w-[27px] items-center justify-center border-r border-[#303c4c] bg-linear-to-b from-[#c2cede] to-[#7d93ad]"><svg viewBox="0 0 12 12" className="h-3 w-3"><path d="M3.500 1.500h8v7h-8Z" fill="#fff" stroke="#404a58" /><path d="M1.500 3.500h7v7h-7Z" fill="#fff" stroke="#404a58" /><path d="M4 6h2v2H4Z" fill="#fff" stroke="#404a58" /></svg></button>
        <button aria-label="Close" className="flex w-[47px] items-center justify-center bg-linear-to-b from-[#e0a090] via-[#c8412a] to-[#b83418]"><svg viewBox="0 0 12 10" className="h-[10px] w-3"><path d="m2 1 8 8M10 1 2 9" stroke="#504048" strokeWidth="4" /><path d="m2 1 8 8M10 1 2 9" stroke="#fff" strokeWidth="2.200" /></svg></button>
      </div>
    </header>
  );
}

function MenuBar() {
  return (
    <nav className="flex h-[21px] items-center border-b border-[#a0a0a0] pl-[5px] text-[11px]">
      <svg viewBox="0 0 16 16" className="h-[15px] w-[15px]" fill="#fff" stroke="#5a96dc"><rect x="1" y="1" width="9" height="9" /><rect x="4" y="5" width="11" height="10" /><path d="m6 11 2-2 2 4 2-3 1 2M1 3h9" fill="none" /></svg>
      {["Файл", "Вид", "Вставка", "Графики", "Сервис", "Окно", "Справка"].map((m) => (
        <button key={m} className="ml-[9px] px-[5px] leading-[18px] first-of-type:ml-[3px]">{m}</button>
      ))}
      <div className="mr-[2px] ml-auto flex gap-px">
        {["M4 12h6v-2H4Z", "M4 7.500h6v5H4ZM6.500 5.500h6v5h-2M4 8.500h6", "m4 4 7 8M11 4 4 12"].map((d, i) => (
          <button key={d} aria-label={["Minimize chart", "Restore chart", "Close chart"][i]} className="h-[18px] w-[18px] border border-[#8fa6c0] bg-[#dce9f7]">
            <svg viewBox="0 0 16 16" className="h-4 w-4" fill="none" stroke="#62768c" strokeWidth={i === 2 ? 2.2 : 1.2}><path d={d} /></svg>
          </button>
        ))}
      </div>
    </nav>
  );
}

function SidePanel({ head, tab, thumb, w }: { head: string; tab: string; thumb: "top" | "mid"; w: string }) {
  return (
    <aside className={`flex flex-col border-r border-[#a0a0a0] bg-[#f0f0f0] pr-1 pl-[3px] ${w}`}>
      <div className="flex h-4 items-center gap-[2px] text-[11px] text-[#506080]">
        <span className="w-[9px] bg-[#d0e2f4] pl-px leading-[13px]">{head}</span>
        <svg viewBox="0 0 8 8" className="ml-[2px] h-[7px] w-[7px]"><path d="m1 1 6 6M7 1 1 7" stroke="#000" strokeWidth="1.800" /></svg>
      </div>
      <div className="flex min-h-0 flex-1 flex-col items-end border border-[#b8b8b8] bg-white">
        <div className="flex min-h-0 w-[16px] flex-1 flex-col items-center bg-[#f1f1f1] py-[7px]">
          <span className="border-x-[3px] border-b-[4px] border-x-transparent border-b-[#444]" />
          <div className={`flex w-[15px] flex-1 flex-col ${thumb === "mid" ? "justify-center pt-[120px]" : "pt-[6px]"}`}>
            <div className={`flex flex-col items-center justify-center gap-px rounded-[2px] border border-[#999] bg-linear-to-r from-[#f6f6f6] to-[#cfcfd2] ${thumb === "mid" ? "h-[88px]" : "h-[145px]"}`}>
              {[0, 1, 2, 3].map((i) => <span key={i} className="h-px w-[7px] bg-[#555]" />)}
            </div>
          </div>
          <span className="border-x-[3px] border-t-[4px] border-x-transparent border-t-[#444]" />
        </div>
      </div>
      <div className="ml-[2px] h-[20px] overflow-hidden border-b border-l border-black bg-white pr-[2px] text-right text-[12px] leading-[19px]">{tab}</div>
      <div className="h-[6px]" />
    </aside>
  );
}

/* ---------- task bar ---------- */
const Alpari = () => (
  <div className="flex flex-col items-center">
    <svg viewBox="0 0 32 18" className="h-[18px] w-8" fill="none">
      {["#e8452a", "#f08a2a", "#d8b82a", "#8ab83a"].map((c, i) => (
        <path key={c} transform={`translate(0 ${i * 3})`} d="m1 8 3-3 3 2 4-4 3-1 2 1 3-2 4 4 3-1 3 3" stroke={c} strokeDasharray="1.500 .6" />
      ))}
    </svg>
    <span className="font-['Lato',sans-serif] text-[13px] leading-[14px] text-black">alpari</span>
  </div>
);
const TASKS: { name: string; icon: React.ReactNode; active?: boolean; yellow?: boolean }[] = [
  { name: "Explorer", icon: <svg viewBox="0 0 34 32" className="h-8 w-[34px]"><path d="M3 4h9l2 3h6l1-3h9v23H3Z" fill="#f3d77c" stroke="#b99a3c" /><path d="M5 2h5v3H5Z" fill="#3aa63a" /><path d="M13 5h5v3h-5Z" fill="#d33" /><path d="M22 6h5v3h-5Z" fill="#37c" /><path d="M3 10h28v17H3Z" fill="#fbe9a6" /><path d="M8 30V20q0-2 2-2h17q2 0 2 2v10h-5v-6H13v6Z" fill="#9fd6ee" stroke="#4b9dc4" /></svg> },
  { name: "Chrome", icon: <svg viewBox="0 0 32 32" className="h-[30px] w-[30px]"><circle cx="16" cy="16" r="15" fill="#fbc116" /><path d="M29 8.500H16a7.500 7.500 0 0 0-6.500 4L3 8.500A15 15 0 0 1 29 8.500Z" fill="#db4437" /><path d="M3 8.500 9.500 20A7.500 7.500 0 0 0 18 23.300L15 31A15 15 0 0 1 3 8.500Z" fill="#0f9d58" /><circle cx="16" cy="16" r="7" fill="#fff" /><circle cx="16" cy="16" r="5.600" fill="#4285f4" /></svg> },
  { name: "BlueStacks", icon: <svg viewBox="0 0 32 30" className="h-[28px] w-[30px]"><path d="m2 18 14-7 14 7-14 9Z" fill="#2f9bd8" /><path d="m2 15 14-7 14 7-14 9Z" fill="#e8432c" /><path d="m2 12 14-7 14 7-14 9Z" fill="#f7c52c" /><path d="m2 9 14-8 14 8-14 8Z" fill="#8bb91f" /></svg> },
  { name: "AIMP", yellow: true, icon: <svg viewBox="0 0 32 32" className="h-[30px] w-[30px]"><circle cx="15" cy="15" r="14" fill="#111" /><circle cx="15" cy="15" r="11" fill="#f59d14" /><path d="m15 8 7 12H8Z" fill="none" stroke="#111" strokeWidth="3" /><path d="M19 18h4v11h-4ZM25 18h4v11h-4Z" fill="#fff" stroke="#222" /></svg> },
  { name: "WinRAR", icon: <svg viewBox="0 0 34 28" className="h-[28px] w-[34px]"><path d="M5 1h23l4 4v4H8Z" fill="#9b3d96" /><path d="M8 5h24" stroke="#c97bc4" /><path d="M7 9h25v8H7Z" fill="#2c55c0" /><path d="M8 12h24" stroke="#7fa0ea" /><path d="M7 17h25v8H7Z" fill="#2f8a4a" /><path d="M8 20h24" stroke="#7ac490" /><path d="M3 2 8 6v4H3ZM3 10l5 1v5H3ZM3 17l5 1v7l-5-2Z" fill="#e8e0e0" stroke="#444" strokeWidth=".7" /><path d="M18 1h5v25h-5Z" fill="#b8863a" /><path d="M17 12h7v7h-7Z" fill="#5a3a10" stroke="#e8d28a" strokeWidth="1.500" /></svg> },
  { name: "Alpari", icon: <Alpari /> },
  { name: "Alpari Demo", icon: <Alpari />, active: true },
  { name: "DBM", icon: <svg viewBox="0 0 34 34" className="h-8 w-8"><circle cx="16" cy="16" r="15" fill="#dfe3ea" stroke="#8b95a5" /><circle cx="17" cy="16" r="11" fill="#c4601c" stroke="#6d3410" /><path d="M13 8h5q6 1 6 8t-6 8h-5ZM16 11v10" fill="none" stroke="#f4e6da" strokeWidth="2.500" /><path d="M18 20h7v6h-7Z" fill="#e23b2a" /><path d="M26 20h7v6h-7Z" fill="#6fb52c" /><path d="M18 27h7v6h-7Z" fill="#3b6fd6" /><path d="M26 27h7v6h-7Z" fill="#f5c52a" /></svg> },
];

function TaskBar() {
  return (
    <footer className="flex h-[39px] shrink-0 items-center overflow-hidden border-t border-[#5c7088] bg-[radial-gradient(60px_30px_at_91%_0%,#4a5a70_0%,transparent_100%),linear-gradient(45deg,transparent_54%,transparent_55%),linear-gradient(55deg,transparent_55%,#54262c_56.500%,#54262c_58%,#6d7c88_58.500%,transparent_59.500%),linear-gradient(90deg,#101c28_0%,#0e1620_25%,#1c2c3c_40%,#3d5670_44%,#34465c_47%,#141c28_50%,#0a0e14_62%,#080c12_100%)] text-white">
      <button aria-label="Start" className="ml-2 flex h-[37px] w-[38px] items-center justify-center rounded-full bg-[radial-gradient(circle_at_50%_85%,#4fd2f5_0%,#1c6ea8_45%,#0e3152_75%)]">
        <svg viewBox="0 0 24 24" className="h-[25px] w-[25px]"><path d="M2 5q5-3 9 0L10 11q-4-2-8 0Z" fill="#f0652f" /><path d="M12.500 5.500q5 2 9.500-.5l-1.500 6.500q-4 2-9 0Z" fill="#8cc63f" /><path d="M1.500 12.500q4-2 8 0L8.500 19q-4-2-8.500 0Z" fill="#4ea6e6" /><path d="M11 13q5 2 9 .5L18.500 20q-4 2-8.500-.5Z" fill="#fdc52e" /></svg>
      </button>
      <svg viewBox="0 0 30 30" className="mr-[19px] ml-[28px] h-[29px] w-[29px]" fill="none"><path d="m6 2 21 1-2 22-22 2Z" fill="#2b5076" stroke="#6f9bc8" strokeWidth="1.500" /><circle cx="13" cy="15" r="8.500" fill="#0e2036" stroke="#4ba0ea" strokeWidth="2" /><path d="M8 9q5 6 0 12M18 9q-5 6 0 12" stroke="#4ba0ea" strokeWidth="2" /><path d="m25 6-1 18" stroke="#b5cfe8" strokeWidth="1.500" strokeDasharray="3 2" /></svg>
      <div className="flex gap-1">
        {TASKS.map((t) => (
          <button
            key={t.name}
            aria-label={t.name}
            className={`flex h-[38px] w-[58px] items-center justify-center rounded-[3px] border border-[#8a939c] ${t.active ? "bg-linear-to-br from-[#c8ccd2] to-[#8a929c]" : "bg-linear-to-br from-[#5a6168] to-[#1c2228]"} ${t.yellow ? "border-l-2 border-l-[#f6e93a]" : ""}`}
          >
            {t.icon}
          </button>
        ))}
      </div>
      <div className="ml-auto flex items-center self-stretch">
        <span className="mb-[6px] text-[12px]">RU</span>
        <span className="ml-[15px] h-0 w-0 border-x-[4px] border-b-[4px] border-x-transparent border-b-white" />
        <svg viewBox="0 0 16 16" className="ml-[14px] h-4 w-4" fill="#fff"><path d="M1 1h1.500v14H1ZM3.500 2h5v1.500h5.500l-1 5H8V7H3.500Z" /></svg>
        <svg viewBox="0 0 16 16" className="ml-2 h-4 w-4" fill="none" stroke="#fff" strokeWidth="1.400"><path d="M6 5.500h8.500v6H4.500V7M10 11.500V14M5.500 14.500H13M1 1v3h4V1M3 4v8h2" /></svg>
        <svg viewBox="0 0 16 16" className="ml-2 h-4 w-4" fill="none" stroke="#fff" strokeWidth="1.200"><path d="M1 5.500h2.500L7.500 2v12L3.500 10.500H1Z" fill="#fff" /><path d="M9.500 6q1.500 2 0 4M11.500 4.500q3 3.500 0 7M13.500 3q4 5 0 10" /></svg>
        <div className="ml-[12px] w-[66px] text-center text-[11px] leading-[17px]">20:50<br />15.01.2016</div>
        <button aria-label="Show desktop" className="ml-[7px] h-full w-[14px] border border-[#566270] bg-linear-to-b from-[#5d6b7a] to-[#10161e]" />
      </div>
    </footer>
  );
}

export default function App() {
  const tabs = ["XAUUSD,H1", "XAUUSD,H1", "XAUUSD,H1", "XAUUSD,H1", "CADJPY,M1"];
  const quotes: [string, string][] = [
    ["O: 1073.500", "w-[71px]"], ["H: 1074.180", "w-[71px]"], ["L: 1073.130", "w-[68px]"], ["C: 1073.900", "w-[70px]"], ["V: 1153", "w-[66px]"],
  ];
  return (
    <div className={`flex h-screen flex-col overflow-hidden bg-[#f0f0f0] ${UI} text-[12px] text-black`}>
      <TitleBar />
      <MenuBar />
      <Toolbar1 />
      <Toolbar2 />
      <main className="flex min-h-0 flex-1 border-t border-[#909090]">
        <SidePanel head="С" tab="С" thumb="top" w="w-[31px]" />
        <SidePanel head="Н" tab="О" thumb="mid" w="w-[31px]" />
        <div className="flex min-w-0 flex-1 flex-col">
          <div className="flex min-h-0 flex-1 flex-col bg-black pt-[2px] pr-[5px] pb-[2px] pl-[2px]">
            <section className="h-[324px] shrink-0 overflow-hidden border border-[#c0c0c0]">
              <TopStrip />
              <div className="border-b-2 border-[#404040]"><Board /></div>
            </section>
            <section className="mt-px min-h-0 flex-1 overflow-hidden border border-[#c0c0c0]">
              <Report />
            </section>
          </div>
          <div className="mt-[2px] flex h-[22px] shrink-0 border-t border-black text-[#707070]">
            {tabs.map((t, i) => (
              <button
                key={i}
                className={`relative h-[19px] w-[84px] pr-[5px] text-[11px] leading-[18px] ${i === 3 ? "border border-t-0 border-black bg-white text-black" : i === 2 ? "" : "after:absolute after:top-[2px] after:right-0 after:h-[14px] after:w-px after:bg-[#606060]"} first:ml-[4px]`}
              >
                {t}
              </button>
            ))}
            <div className="mt-[6px] mr-[9px] ml-auto flex gap-4">
              <span className="h-0 w-0 border-y-[3px] border-r-[4px] border-y-transparent border-r-[#909090]" />
              <span className="h-0 w-0 border-y-[3px] border-l-[4px] border-y-transparent border-l-[#909090]" />
            </div>
          </div>
        </div>
      </main>
      <div className="flex h-[28px] shrink-0 items-start border-t border-white">
        <div className="flex w-[15px] flex-col items-center gap-[5px] pt-[5px]">
          <svg viewBox="0 0 8 8" className="h-[6px] w-[6px]"><path d="m1 1 6 6M7 1 1 7" stroke="#000" strokeWidth="1.800" /></svg>
          <span className="h-2 w-1 bg-[repeating-linear-gradient(180deg,#999_0_1px,#f0f0f0_1px_2px)]" />
        </div>
        <div className="mt-[2px] mr-[2px] flex h-[23px] flex-1 items-center gap-[5px] border border-[#e8e8e8] border-t-[#a0a0a0] border-l-[#a0a0a0] bg-white pl-[5px] text-[11px] whitespace-pre">
          <span className="h-2 w-2 rounded-full border border-[#777] bg-[#bbb]" />
          {"Баланс: 2 012.97 USD  Прибыль: -4.34  Средства: 2 008.63  Маржа: 41.10  Свободная маржа: 1 967.53  Уровень: 4887.18%"}
        </div>
      </div>
      <div className="flex h-[25px] shrink-0 items-center border-t border-[#a0a0a0] text-[11px] whitespace-nowrap">
        <span className="flex-1 pl-[2px]">Для справки, нажмите F1</span>
        <span className="h-[18px] w-[116px] border-l border-[#a0a0a0] pl-[5px] leading-[18px]">DBM</span>
        <span className="h-[18px] w-[102px] border-l border-[#a0a0a0] pl-[5px] leading-[18px]">2015.12.23 02:00</span>
        {quotes.map(([q, w]) => (
          <span key={q} className={`h-[18px] border-l border-[#a0a0a0] pl-[5px] leading-[18px] ${w}`}>{q}</span>
        ))}
        <span className="flex h-[18px] w-[130px] items-center gap-[3px] border-l border-[#a0a0a0] pl-[5px]">
          <svg viewBox="0 0 24 14" className="h-[14px] w-6">
            {[0, 1, 2, 3, 4, 5, 6, 7].map((i) => (
              <g key={i}><path d={`M${i * 3} 0h2v${9 - i}h-2Z`} fill="#5f8010" /><path d={`M${i * 3} ${10 - i}h2V14h-2Z`} fill="#104a6a" /></g>
            ))}
          </svg>
          16309/18 kb
        </span>
      </div>
      <TaskBar />
    </div>
  );
}
